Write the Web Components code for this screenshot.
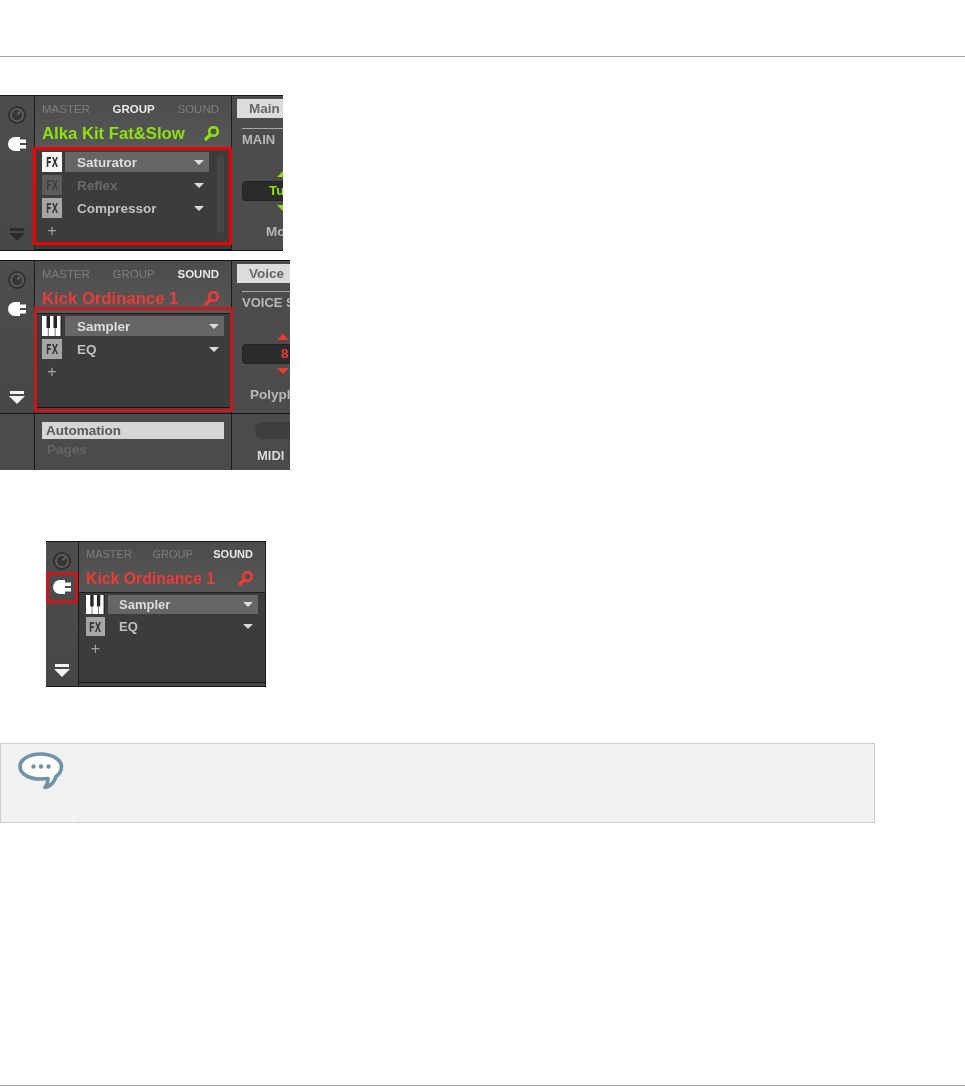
<!DOCTYPE html>
<html>
<head>
<meta charset="utf-8">
<title>Plug-in list</title>
<style>
    html, body { margin: 0; background: #fff; }
    body { height: 1086px; overflow: hidden; font-family: "Liberation Sans", Arial, sans-serif; }
    doc-rule.top { margin-top: 56px; }
    doc-rule.bottom { margin-top: 262px; }
    .p1 { margin-top: 38px; }
    .p2 { margin-top: 9px; }
    .p3 { margin-top: 71px; margin-left: 46px; }
    note-box { margin-top: 56px; }
</style>
</head>
<body>
<doc-rule class="top"></doc-rule>

<ni-panel class="p1" active="GROUP" name="Alka Kit Fat&amp;Slow" accent="#8fe010"
    style="--w:283px; --h:156px; --rail:35px; --main:197px; --first:3px; --list-right:22px;">
    <ni-row icon="fx-on" selected>Saturator</ni-row>
    <ni-row icon="fx-off" disabled>Reflex</ni-row>
    <ni-row icon="fx">Compressor</ni-row>
    <ni-add></ni-add>
    <ni-scroll slot="over" style="left:217px; top:60px; height:78px;"></ni-scroll>
    <ni-mark slot="over" style="left:33px; top:52px; width:199px; height:98px; --c:#f00000;"></ni-mark>
    <ni-side slot="side" tab="Main" heading="MAIN" value="Tu" label="Mo" color="#8fe010" indent="26" lindent="24"></ni-side>
</ni-panel>

<ni-panel class="p2" active="SOUND" name="Kick Ordinance 1" accent="#f03a35" arrow foot
    style="--w:290px; --h:210px; --rail:35px; --main:197px; --list-right:7px; --head:52px; --first:2px; --strip:6px;">
    <ni-row icon="piano" selected>Sampler</ni-row>
    <ni-row icon="fx">EQ</ni-row>
    <ni-add></ni-add>
    <ni-mark slot="over" style="left:34px; top:47px; width:199px; height:105px; --c:#c8181c;"></ni-mark>
    <ni-side slot="side" tab="Voice" heading="VOICE S" value="8" label="Polyph" color="#f03a35" indent="38" lindent="8" style="--rule-gap:8px;"></ni-side>
    <ni-foot-list slot="foot-main"></ni-foot-list>
    <ni-foot-side slot="foot-side"></ni-foot-side>
</ni-panel>

<ni-panel class="p3" active="SOUND" name="Kick Ordinance 1" accent="#f03a35" arrow
    style="--w:220px; --h:146px; --rail:33px; --main:187px; --side:0; --list-right:7px; --head:50px; --first:2px; --strip:4px; --pitch:3px;
           --icon:19px; --gap:3px; --tab-size:11px; --title-size:15.8px; --row-size:13px; --row-pad:11px; --knob-gap:10px; --tabs-top:6px;">
    <ni-row icon="piano" selected>Sampler</ni-row>
    <ni-row icon="fx">EQ</ni-row>
    <ni-add></ni-add>
    <ni-mark slot="over" style="left:0; top:31px; width:32px; height:31px; --c:#c8181c;"></ni-mark>
</ni-panel>

<note-box></note-box>
<doc-rule class="bottom"></doc-rule>

<script>
// page rule at top and bottom of the manual page
class DocRule extends HTMLElement {
    connectedCallback() {
        this.attachShadow({ mode: 'open' });
        this.shadowRoot.innerHTML = `
            <style>:host { display: block; height: 1px; background: #a6a6a6; }</style>
        `;
    }
}

const panelTemplate = document.createElement('template');
panelTemplate.innerHTML = `
    <style>
        :host {
            display: block;
            position: relative;
            width: var(--w);
            height: var(--h);
            overflow: hidden;
            filter: blur(0.4px);
            font-family: "Liberation Sans", Arial, sans-serif;
        }
        .wrap {
            display: grid;
            grid-template-columns: var(--rail) var(--main) var(--side, 1fr);
            grid-template-rows: 1fr;
            height: 100%;
            box-sizing: border-box;
            background: #4c4c4c;
            border-top: 1px solid #161616;
            border-bottom: 1px solid #161616;
        }
        :host([foot]) .wrap { grid-template-rows: 152px 1fr; border-bottom: 0; }
        .f { display: none; border-top: 1px solid #161616; background: #4b4b4b; overflow: hidden; }
        :host([foot]) .f { display: block; }
        .frail, .rail { border-right: 1px solid #1c1c1c; box-sizing: border-box; }
        .rail {
            display: flex;
            flex-direction: column;
            align-items: center;
            background: linear-gradient(#4d4d4d, #474747);
        }
        .knob { margin-top: 10px; width: 18px; height: 18px; }
        .plug { margin-top: var(--knob-gap, 13px); width: 18px; height: 14px; }
        .arrow { margin-top: auto; margin-bottom: 8px; width: 16px; height: 14px; }
        .main {
            display: flex;
            flex-direction: column;
            border-right: 1px solid #1c1c1c;
            box-sizing: border-box;
            min-width: 0;
        }
        .head {
            height: var(--head, 52px);
            flex: none;
            box-sizing: border-box;
            padding: var(--tabs-top, 7px) 12px 0 7px;
            background: linear-gradient(#4c4c4c, #575757);
        }
        .tabs {
            display: flex;
            justify-content: space-between;
            font-size: var(--tab-size, 11.5px);
            line-height: 13px;
            color: #7c7c7c;
        }
        .tabs .on { color: #e8e8e8; font-weight: bold; }
        .title {
            display: flex;
            justify-content: space-between;
            align-items: center;
            margin-top: 6px;
            height: 24px;
            font-size: var(--title-size, 16.7px);
            font-weight: bold;
            white-space: nowrap;
        }
        .title svg { width: 15px; height: 15px; flex: none; margin-top: -2px; }
        .list {
            flex: 1;
            display: flex;
            flex-direction: column;
            gap: var(--pitch, 3px);
            box-sizing: border-box;
            padding: var(--first, 4px) var(--list-right) 0 7px;
            background: #3c3c3c;
            border-top: 1px solid #1e1e1e;
        }
        .strip { height: var(--strip, 0); flex: none; background: #444; border-top: 1px solid #141414; box-sizing: border-box; }
        .side, .fside { min-width: 0; overflow: hidden; }
    </style>
    <div class="wrap">
        <div class="rail">
            <svg class="knob" viewBox="0 0 18 18">
                <circle cx="9" cy="9" r="9" fill="#303030"/>
                <circle cx="9" cy="9" r="7" fill="#5e5e5e"/>
                <circle cx="9" cy="9" r="5.2" fill="#363636"/>
                <path d="M9.5 8.5 L12 5.5" stroke="#6e6e6e" stroke-width="1.6"/>
            </svg>
            <svg class="plug" viewBox="0 0 18 14">
                <path d="M7 0 H12 V2.5 H18 V6 H12 V8 H18 V11.5 H12 V14 H7 A7 7 0 0 1 7 0 Z" fill="#fff"/>
            </svg>
            <svg class="arrow" viewBox="0 0 16 14">
                <path class="shape" d="M1 0 H15 V3 H1 Z M0 5 H16 L8 13 Z"/>
            </svg>
        </div>
        <div class="main">
            <div class="head">
                <div class="tabs"></div>
                <div class="title">
                    <span class="name"></span>
                    <svg viewBox="0 0 15 15"><circle cx="9.5" cy="5.5" r="4.3" fill="none" stroke-width="2.6"/><path d="M6 9 L2 13" stroke-width="3.4" stroke-linecap="round"/></svg>
                </div>
            </div>
            <div class="list"><slot></slot></div>
            <div class="strip"></div>
        </div>
        <div class="side"><slot name="side"></slot></div>
        <div class="f frail"></div>
        <div class="f fmain" style="border-right:1px solid #1c1c1c"><slot name="foot-main"></slot></div>
        <div class="f fside"><slot name="foot-side"></slot></div>
    </div>
    <slot name="over"></slot>
`;

class NiPanel extends HTMLElement {
    connectedCallback() {
        this.attachShadow({ mode: 'open' }).appendChild(panelTemplate.content.cloneNode(true));
        const root = this.shadowRoot;
        const accent = this.getAttribute('accent');
        const active = this.getAttribute('active');
        root.querySelector('.tabs').innerHTML = ['MASTER', 'GROUP', 'SOUND']
            .map((t) => `<span class="${t === active ? 'on' : ''}">${t}</span>`).join('');
        const name = root.querySelector('.name');
        name.textContent = this.getAttribute('name');
        name.style.color = accent;
        root.querySelector('.title svg circle').setAttribute('stroke', accent);
        root.querySelector('.title svg path').setAttribute('stroke', accent);
        root.querySelector('.shape').setAttribute('fill', this.hasAttribute('arrow') ? '#f4f4f4' : '#2c2c2c');
    }
}

const ICONS = {
    piano: `<svg viewBox="0 0 20 20" width="100%" height="100%">
        <rect width="20" height="20" fill="#fff"/>
        <path d="M4.5 0 H8 V12 H4.5 Z M11.5 0 H15 V12 H11.5 Z M18.5 0 H20 V20 H18.5 Z" fill="#262626"/>
        <path d="M6.3 12 V20 M13.2 12 V20" stroke="#777" stroke-width="1"/>
    </svg>`,
};

class NiRow extends HTMLElement {
    connectedCallback() {
        const icon = this.getAttribute('icon');
        this.attachShadow({ mode: 'open' });
        const fx = { 'fx-on': '#f6f6f6', 'fx': '#a6a6a6', 'fx-off': '#5c5c5c' }[icon];
        const fxColor = { 'fx-on': '#333', 'fx': '#3a3a3a', 'fx-off': '#404040' }[icon];
        this.shadowRoot.innerHTML = `
            <style>
                :host {
                    display: flex;
                    gap: var(--gap, 3px);
                    height: var(--icon, 20px);
                    font-size: var(--row-size, 13.5px);
                    font-weight: bold;
                    color: #c0c0c0;
                }
                .icon {
                    flex: none;
                    width: var(--icon, 20px);
                    height: var(--icon, 20px);
                    display: flex;
                    align-items: center;
                    justify-content: center;
                    overflow: hidden;
                }
                .icon b {
                    font: bold 14px/1 "DejaVu Sans Condensed", "Liberation Sans Narrow", sans-serif;
                    transform: scaleX(0.66);
                }
                .bar {
                    flex: 1;
                    display: flex;
                    align-items: center;
                    justify-content: space-between;
                    padding: 0 5px 0 var(--row-pad, 12px);
                }
                :host([selected]) { color: #dcdcdc; }
                :host([selected]) .bar { background: #666; }
                :host([disabled]) { color: #696969; }
                .bar i { width: 0; height: 0; border: 5px solid transparent; border-top: 5px solid #dcdcdc; border-bottom: 0; }
            </style>
            <span class="icon" style="${fx ? `background:${fx};color:${fxColor}` : ''}">${fx ? '<b>FX</b>' : ICONS[icon]}</span>
            <span class="bar"><span><slot></slot></span><i></i></span>
        `;
    }
}

class NiAdd extends HTMLElement {
    connectedCallback() {
        this.attachShadow({ mode: 'open' });
        this.shadowRoot.innerHTML = `
            <style>
                :host {
                    display: block;
                    height: var(--icon, 20px);
                    width: var(--icon, 20px);
                    text-align: center;
                    font: 16px/20px "Liberation Sans", sans-serif;
                    color: #a4a4a4;
                }
            </style>+
        `;
    }
}

// thin scroll track that sits over the list
class NiScroll extends HTMLElement {
    connectedCallback() {
        this.attachShadow({ mode: 'open' });
        this.shadowRoot.innerHTML = `
            <style>:host { display: block; position: absolute; width: 7px; background: #474747; border-radius: 4px; }</style>
        `;
    }
}

// red highlight frame drawn over the screenshot
class NiMark extends HTMLElement {
    connectedCallback() {
        this.attachShadow({ mode: 'open' });
        this.shadowRoot.innerHTML = `
            <style>:host { display: block; position: absolute; box-sizing: border-box; border: 3px solid var(--c); }</style>
        `;
    }
}

class NiSide extends HTMLElement {
    connectedCallback() {
        const color = this.getAttribute('color');
        const indent = this.getAttribute('indent');
        const lindent = this.getAttribute('lindent');
        this.attachShadow({ mode: 'open' });
        this.shadowRoot.innerHTML = `
            <style>
                :host { display: block; font-weight: bold; color: #b8b8b8; font-size: 13px; white-space: nowrap; }
                .tab {
                    margin: 3px 0 0 5px;
                    height: 19px;
                    line-height: 19px;
                    padding-left: 12px;
                    background: #dcdcdc;
                    color: #666;
                    font-size: 13.5px;
                }
                .rule { margin: var(--rule-gap, 10px) 0 0 10px; height: 1px; background: #a8a8a8; }
                .heading { margin: 3px 0 0 10px; line-height: 15px; }
                .control { margin: 24px 0 0 10px; }
                .tri { width: 12px; height: 6px; margin-left: 35px; background: ${color}; }
                .tri.up { clip-path: polygon(50% 0, 100% 100%, 0 100%); }
                .tri.down { clip-path: polygon(0 0, 100% 0, 50% 100%); }
                .value {
                    margin: 4px 0;
                    height: 20px;
                    line-height: 18px;
                    width: 90px;
                    box-sizing: border-box;
                    padding-left: ${indent}px;
                    background: #2b2b2b;
                    border: 1px solid #222;
                    border-radius: 4px;
                    color: ${color};
                    font-size: 13.5px;
                }
                .label { margin: 13px 0 0 ${+lindent + 10}px; line-height: 15px; font-size: 13.5px; }
            </style>
            <div class="tab">${this.getAttribute('tab')}</div>
            <div class="rule"></div>
            <div class="heading">${this.getAttribute('heading')}</div>
            <div class="control">
                <div class="tri up"></div>
                <div class="value">${this.getAttribute('value')}</div>
                <div class="tri down"></div>
            </div>
            <div class="label">${this.getAttribute('label')}</div>
        `;
    }
}

class NiFootList extends HTMLElement {
    connectedCallback() {
        this.attachShadow({ mode: 'open' });
        this.shadowRoot.innerHTML = `
            <style>
                :host { display: block; padding: 8px 7px 0; font-size: 13.5px; font-weight: bold; }
                .on { height: 17px; line-height: 17px; padding-left: 4px; background: #d6d6d6; color: #5a5a5a; }
                .off { margin-top: 3px; line-height: 16px; padding-left: 5px; color: #646464; }
            </style>
            <div class="on">Automation</div>
            <div class="off">Pages</div>
        `;
    }
}

class NiFootSide extends HTMLElement {
    connectedCallback() {
        this.attachShadow({ mode: 'open' });
        this.shadowRoot.innerHTML = `
            <style>
                :host { display: block; padding: 8px 0 0 23px; font-size: 13px; font-weight: bold; color: #d8d8d8; }
                .pill { height: 17px; width: 60px; background: #3e3e3e; border-radius: 8px; }
                .midi { margin: 9px 0 0 2px; line-height: 15px; }
            </style>
            <div class="pill"></div>
            <div class="midi">MIDI</div>
        `;
    }
}

class NoteBox extends HTMLElement {
    connectedCallback() {
        this.attachShadow({ mode: 'open' });
        this.shadowRoot.innerHTML = `
            <style>
                :host {
                    display: flex;
                    box-sizing: border-box;
                    width: 875px;
                    height: 80px;
                    background: #f1f1f1;
                    border: 1px solid #cfcfcf;
                }
                .icon {
                    width: 73px;
                    box-sizing: border-box;
                    padding: 8px 0 0 17px;
                    border-right: 1px solid #f8f8f8;
                }
                svg { display: block; width: 46px; height: 38px; }
            </style>
            <div class="icon">
                <svg viewBox="0 0 46 38">
                    <path d="M22.5 2 C10.5 2 2 8 2 14.5 C2 21.5 10.5 27 22.5 27 L30 26.5 C30 30 29 33 27 35.5 C32 35 36.5 30 38 24.5 C41.5 22 43.5 18.5 43.5 14.5 C43.5 8 34.5 2 22.5 2 Z"
                        fill="#fff" stroke="#6e93ab" stroke-width="3.6" stroke-linejoin="round"/>
                    <circle cx="15.5" cy="14.5" r="2.2" fill="#6e93ab"/>
                    <circle cx="23" cy="14.5" r="2.2" fill="#6e93ab"/>
                    <circle cx="30.5" cy="14.5" r="2.2" fill="#6e93ab"/>
                </svg>
            </div>
        `;
    }
}

customElements.define('doc-rule', DocRule);
customElements.define('ni-panel', NiPanel);
customElements.define('ni-row', NiRow);
customElements.define('ni-add', NiAdd);
customElements.define('ni-scroll', NiScroll);
customElements.define('ni-mark', NiMark);
customElements.define('ni-side', NiSide);
customElements.define('ni-foot-list', NiFootList);
customElements.define('ni-foot-side', NiFootSide);
customElements.define('note-box', NoteBox);
</script>
</body>
</html>
